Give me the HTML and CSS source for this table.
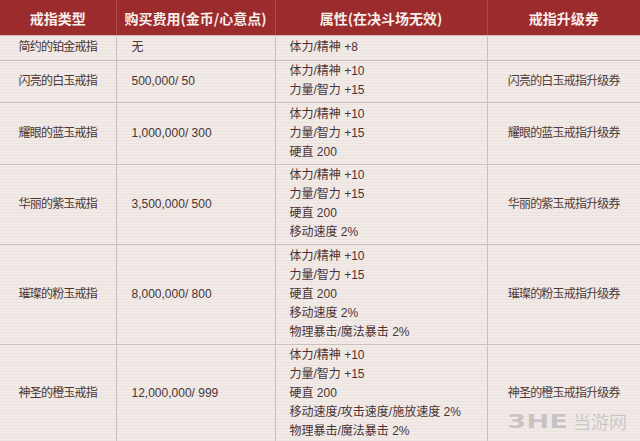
FILE: index.html
```html
<!DOCTYPE html>
<html lang="zh">
<head>
<meta charset="utf-8">
<link rel="stylesheet" href="styles.css">
</head>
<body>
<div class="wrap">
<table class="rings">
  <colgroup>
    <col class="c1"><col class="c2"><col class="c3"><col class="c4">
  </colgroup>
  <thead>
    <tr><th>戒指类型</th><th>购买费用(金币/心意点)</th><th>属性(在决斗场无效)</th><th>戒指升级券</th></tr>
  </thead>
  <tbody>
    <tr class="r1"><td class="name">简约的铂金戒指</td><td class="cost">无</td><td class="attr">体力/精神 +8</td><td class="ticket"></td></tr>
    <tr><td class="name">闪亮的白玉戒指</td><td class="cost">500,000/ 50</td><td class="attr">体力/精神 +10<br>力量/智力 +15</td><td class="ticket">闪亮的白玉戒指升级券</td></tr>
    <tr><td class="name">耀眼的蓝玉戒指</td><td class="cost">1,000,000/ 300</td><td class="attr">体力/精神 +10<br>力量/智力 +15<br>硬直 200</td><td class="ticket">耀眼的蓝玉戒指升级券</td></tr>
    <tr><td class="name">华丽的紫玉戒指</td><td class="cost">3,500,000/ 500</td><td class="attr">体力/精神 +10<br>力量/智力 +15<br>硬直 200<br>移动速度 2%</td><td class="ticket">华丽的紫玉戒指升级券</td></tr>
    <tr><td class="name">璀璨的粉玉戒指</td><td class="cost">8,000,000/ 800</td><td class="attr">体力/精神 +10<br>力量/智力 +15<br>硬直 200<br>移动速度 2%<br>物理暴击/魔法暴击 2%</td><td class="ticket">璀璨的粉玉戒指升级券</td></tr>
    <tr><td class="name">神圣的橙玉戒指</td><td class="cost">12,000,000/ 999</td><td class="attr">体力/精神 +10<br>力量/智力 +15<br>硬直 200<br>移动速度/攻击速度/施放速度 2%<br>物理暴击/魔法暴击 2%</td><td class="ticket">神圣的橙玉戒指升级券</td></tr>
  </tbody>
</table>
<div class="watermark"><span class="wm-logo">3HE</span><span class="wm-text">当游网</span></div>
</div>
</body>
</html>
```
FILE: styles.css
```css
html, body {
  margin: 0;
  padding: 0;
  background: #f0e9e6;
}
body {
  width: 640px;
  height: 441px;
  overflow: hidden;
  font-family: "Liberation Sans", "Noto Sans CJK SC", sans-serif;
  font-size: 12px;
  color: #4a3434;
}
.wrap {
  position: relative;
  width: 640px;
  height: 441px;
  overflow: hidden;
  background: repeating-linear-gradient(180deg, #f1eae7 0px, #f1eae7 2px, #ebe3e0 2px, #ebe3e0 3px);
}
.rings {
  width: 640px;
  border-collapse: collapse;
  table-layout: fixed;
}
.c1 { width: 116px; }
.c2 { width: 159px; }
.c3 { width: 212px; }
.c4 { width: 153px; }
.rings th {
  background: #9c2b2d;
  color: #f8eeea;
  font-family: "Noto Sans CJK SC", sans-serif;
  font-weight: bold;
  font-size: 14px;
  height: 35px;
  padding: 0;
  text-align: center;
  border-left: 1px solid #ac4a4a;
  border-bottom: 1px solid #c9bcb8;
}
.rings th:first-child { border-left: none; }
.rings td {
  border: 1px solid #cbc0bd;
  padding: 1.5px 0 2px;
  line-height: 19px;
  vertical-align: middle;
}
.rings td:first-child { border-left: none; }
.rings td:last-child { border-right: none; }
.r1 td { height: 20px; }
.name { text-align: center; letter-spacing: -0.8px; }
.cost { padding-left: 15px !important; }
.attr { padding-left: 14px !important; }
.ticket { text-align: center; letter-spacing: -0.8px; color: #4f3a3a; }
.watermark {
  position: absolute;
  left: 507px;
  top: 408px;
  display: flex;
  align-items: center;
  color: #c9c4c3;
  font-family: "Noto Sans CJK SC", sans-serif;
  font-weight: bold;
  text-shadow: 0 0 1px #ffffff;
}
.wm-logo {
  font-family: "DejaVu Sans", sans-serif;
  font-size: 19px;
  transform: scaleX(1.45);
  transform-origin: left center;
  margin-right: 24px;
}
.wm-text {
  font-size: 18px;
  font-weight: normal;
}
```
